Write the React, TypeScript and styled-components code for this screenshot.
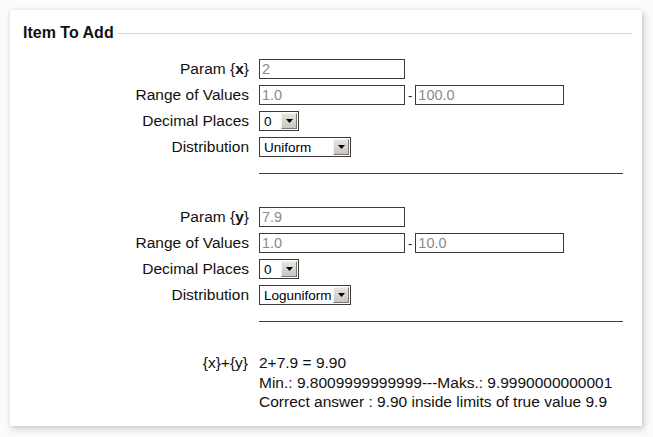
import { FC } from 'react'
import styled, { createGlobalStyle } from 'styled-components'

const GlobalStyle = createGlobalStyle`
  html, body {
    margin: 0;
    padding: 0;
    background: #fbfbfb;
  }
  body {
    font-family: "Liberation Sans", Arial, sans-serif;
  }
`

const Page = styled.div`
  padding: 10px 11px 10px 10px;
`

const Card = styled.div`
  background: #fff;
  box-shadow: 2px 3px 7px rgba(0, 0, 0, 0.18), 0 0 4px rgba(0, 0, 0, 0.08);
  padding: 16px 10px 14px 13px;
`

const Header = styled.div`
  display: flex;
  align-items: center;
  gap: 4px;
  height: 14px;
  margin-bottom: 16px;
`

const Title = styled.span`
  font-weight: bold;
  font-size: 16px;
  color: #111;
`

const HeaderLine = styled.div`
  flex: 1;
  height: 1px;
  background: #d8d8d8;
`

const Section = styled.div<{ $top?: number }>`
  margin-top: ${(p) => p.$top ?? 0}px;
`

const Block = styled.div`
  display: grid;
  grid-template-columns: 226px 1fr;
  grid-auto-rows: 26px;
  column-gap: 10px;
`

const Label = styled.div`
  font-size: 15.5px;
  color: #111;
  text-align: right;
  align-self: center;
  white-space: nowrap;
`

const Controls = styled.div`
  display: flex;
  align-items: center;
  gap: 3px;
  font-size: 14px;
`

const TextBox = styled.div<{ $width?: number }>`
  box-sizing: border-box;
  width: ${(p) => p.$width ?? 146}px;
  height: 20px;
  border: 1px solid #3a3a3a;
  padding: 1px 2px 0;
  font-size: 14.5px;
  color: #8a8a8a;
`

const Dash = styled.span`
  font-size: 13px;
  color: #222;
`

const Select = styled.div<{ $width: number }>`
  box-sizing: border-box;
  width: ${(p) => p.$width}px;
  height: 20px;
  border: 1px solid #3a3a3a;
  display: flex;
  align-items: center;
  padding: 1px;
  font-size: 13.5px;
  color: #000;
`

const SelectText = styled.span`
  flex: 1;
  padding-left: 3px;
  white-space: nowrap;
  overflow: hidden;
`

const ArrowButton = styled.div`
  box-sizing: border-box;
  width: 16px;
  height: 16px;
  background: linear-gradient(#e6e4de, #c9c6bf);
  border: 1px solid;
  border-color: #f4f3ef #7b7870 #7b7870 #f4f3ef;
  display: flex;
  align-items: center;
  justify-content: center;
`

const Rule = styled.div`
  height: 1px;
  background: #3c3c3c;
  margin: 13px 9px 0 236px;
`

const Result = styled.div`
  display: grid;
  grid-template-columns: 225px 1fr;
  column-gap: 11px;
  margin-top: 31px;
  font-size: 15.5px;
  line-height: 19.5px;
  color: #111;
`

const ResultLabel = styled.div`
  text-align: right;
`

const Arrow: FC = () => (
  <svg width="7" height="4" viewBox="0 0 7 4">
    <path d="M0 0h7L3.5 4z" fill="#000" />
  </svg>
)

type ParamProps = {
  name: string
  value: string
  min: string
  max: string
  dist: string
  top?: number
}

const ParamBlock: FC<ParamProps> = ({ name, value, min, max, dist, top }) => (
  <Section $top={top}>
    <Block>
      <Label>
        Param {'{'}
        <b>{name}</b>
        {'}'}
      </Label>
      <Controls>
        <TextBox>{value}</TextBox>
      </Controls>
      <Label>Range of Values</Label>
      <Controls>
        <TextBox>{min}</TextBox>
        <Dash>-</Dash>
        <TextBox $width={149}>{max}</TextBox>
      </Controls>
      <Label>Decimal Places</Label>
      <Controls>
        <Select $width={40}>
          <SelectText>0</SelectText>
          <ArrowButton>
            <Arrow />
          </ArrowButton>
        </Select>
      </Controls>
      <Label>Distribution</Label>
      <Controls>
        <Select $width={92}>
          <SelectText>{dist}</SelectText>
          <ArrowButton>
            <Arrow />
          </ArrowButton>
        </Select>
      </Controls>
    </Block>
    <Rule />
  </Section>
)

export default function App() {
  return (
    <>
      <GlobalStyle />
      <Page>
        <Card>
          <Header>
            <Title>Item To Add</Title>
            <HeaderLine />
          </Header>
          <ParamBlock name="x" value="2" min="1.0" max="100.0" dist="Uniform" />
          <ParamBlock name="y" value="7.9" min="1.0" max="10.0" dist="Loguniform" top={30} />
          <Result>
            <ResultLabel>{'{x}+{y}'}</ResultLabel>
            <div>
              2+7.9 = 9.90
              <br />
              Min.: 9.8009999999999---Maks.: 9.9990000000001
              <br />
              Correct answer : 9.90 inside limits of true value 9.9
            </div>
          </Result>
        </Card>
      </Page>
    </>
  )
}
